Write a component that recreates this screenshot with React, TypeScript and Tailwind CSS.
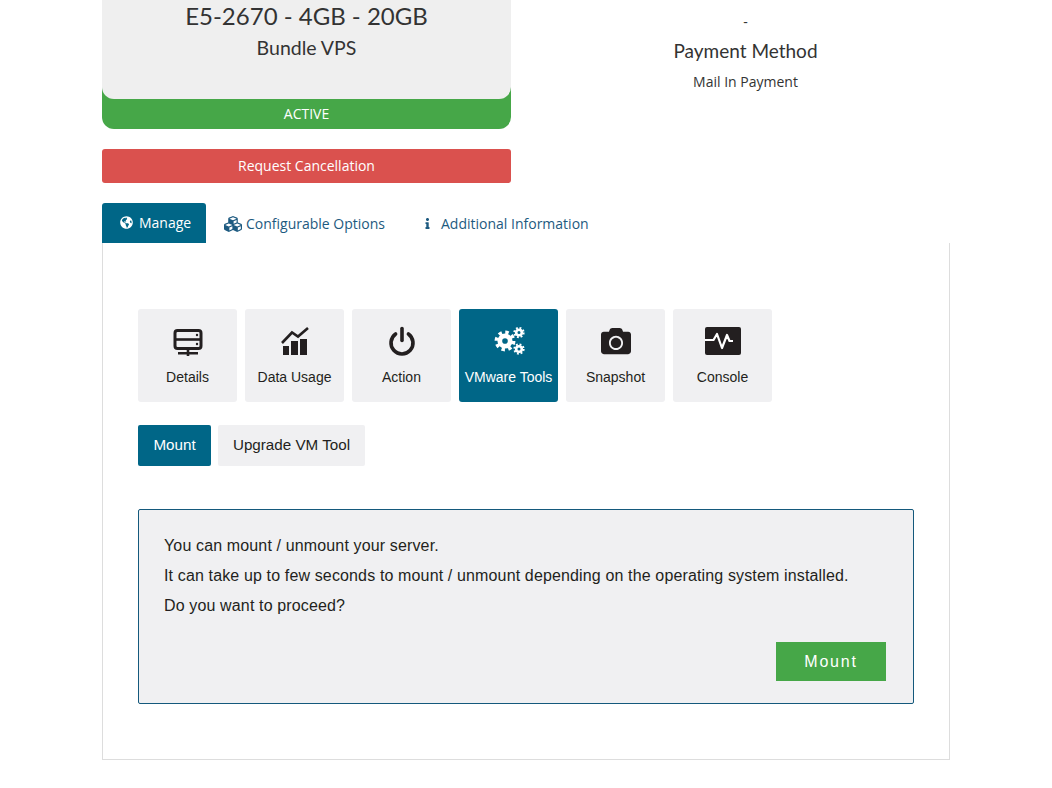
import React from "react";
import { FaCamera, FaCubes, FaGlobeAmericas, FaInfo } from "react-icons/fa";

const ServerIcon = () => (
  <svg width="30" height="30" viewBox="0 0 30 30" fill="none">
    <rect x="2" y="4.5" width="26" height="18" rx="2.5" stroke="#231f20" strokeWidth="3" />
    <path d="M2 13.5h26" stroke="#231f20" strokeWidth="2.6" />
    <circle cx="24" cy="9" r="1.2" fill="#231f20" />
    <circle cx="24" cy="18" r="1.2" fill="#231f20" />
    <path d="M15 23v7M5 27.2h20" stroke="#231f20" strokeWidth="2.6" />
  </svg>
);

const ChartIcon = () => (
  <svg width="30" height="30" viewBox="0 0 30 30" fill="#231f20">
    <rect x="3" y="20" width="6" height="9" />
    <rect x="11" y="15" width="7" height="14" />
    <rect x="20" y="13" width="7" height="16" />
    <path d="M2 17 12 6.5l6 4L28 2" fill="none" stroke="#231f20" strokeWidth="2.6" />
  </svg>
);

const PowerIcon = () => (
  <svg width="30" height="30" viewBox="0 0 30 30" fill="none" stroke="#231f20" strokeWidth="3.6" strokeLinecap="round">
    <path d="M15 2.5v12" />
    <path d="M8.6 8a11 11 0 1 0 12.8 0" />
  </svg>
);

const Gear = ({ cx, cy, r }: { cx: number; cy: number; r: number }) => {
  const teeth = 8;
  const tr = r * 1.2;
  const circ = 2 * Math.PI * tr;
  const dash = circ / teeth / 2;
  return (
    <g fill="none" stroke="#fff">
      <circle cx={cx} cy={cy} r={r * 0.72} strokeWidth={r * 0.66} />
      <circle cx={cx} cy={cy} r={tr} strokeWidth={r * 0.5} strokeDasharray={`${dash} ${dash}`} />
    </g>
  );
};

const GearsIcon = () => (
  <svg width="32" height="30" viewBox="0 0 32 30">
    <Gear cx={12} cy={15} r={7.2} />
    <Gear cx={26} cy={6.5} r={3.9} />
    <Gear cx={26} cy={23} r={3.9} />
  </svg>
);

const ConsoleIcon = () => (
  <svg width="36" height="28" viewBox="0 0 36 28">
    <rect width="36" height="28" rx="2" fill="#231f20" />
    <path d="M0 13h8.5l3.5-6 5 14 5-13 2.5 6H28" fill="none" stroke="#fff" strokeWidth="2.2" strokeLinejoin="round" />
  </svg>
);

const tiles = [
  { label: "Details", icon: <ServerIcon /> },
  { label: "Data Usage", icon: <ChartIcon /> },
  { label: "Action", icon: <PowerIcon /> },
  { label: "VMware Tools", icon: <GearsIcon />, active: true },
  { label: "Snapshot", icon: <FaCamera className="text-[30px] text-[#231f20]" /> },
  { label: "Console", icon: <ConsoleIcon /> },
];

export default function App() {
  return (
    <div className="h-[788px] overflow-hidden bg-white pl-[102px] pr-[102px] font-['Open_Sans',sans-serif] text-[#333]">
      <div className="flex">
        <div className="w-[409px]">
          <div className="overflow-hidden rounded-b-[12px] bg-[#46a748]">
            <div className="flex h-[99px] flex-col items-center rounded-b-[12px] bg-[#efefef] font-['Lato',sans-serif]">
              <div className="text-[24px] leading-[32px] text-[#333]">E5-2670 - 4GB - 20GB</div>
              <div className="mt-[4px] text-[19.5px] leading-[24px] text-[#333]">Bundle VPS</div>
            </div>
            <div className="flex h-[30px] items-center justify-center pb-[2px] text-[14px] text-white">ACTIVE</div>
          </div>
          <div className="mt-[20px] flex h-[34px] items-center justify-center rounded-[3px] bg-[#da514e] pb-[1px] text-[14px] text-white">
            Request Cancellation
          </div>
        </div>
        <div className="ml-[30px] flex w-[409px] flex-col items-center">
          <div className="mt-[12px] text-[14px] leading-[20px]">-</div>
          <div className="mt-[6px] font-['Lato',sans-serif] text-[19px] leading-[26px]">Payment Method</div>
          <div className="mt-[8px] text-[14px] leading-[20px]">Mail In Payment</div>
        </div>
      </div>

      <div className="mt-[20px] flex h-[40px] text-[14px]">
        <div className="flex h-[40px] w-[104px] items-center rounded-t-[3px] bg-[#006687] pb-[1px] pl-[18px] text-white">
          <FaGlobeAmericas className="mr-[6px] text-[13px]" />
          Manage
        </div>
        <div className="flex items-center pl-[18px] pt-[1px] text-[#1d5a80]">
          <FaCubes className="mr-[4px] text-[18px]" />
          Configurable Options
        </div>
        <div className="ml-[37px] flex items-center pt-[1px] text-[#1d5a80]">
          <FaInfo className="mr-[8px] text-[11px]" />
          Additional Information
        </div>
      </div>

      <div className="h-[517px] w-[848px] border border-t-0 border-[#ddd] pl-[35px] pr-[35px] pt-[66px] font-['Liberation_Sans',sans-serif]">
        <div className="flex gap-[8px]">
          {tiles.map((t) => (
            <div
              key={t.label}
              className={`flex h-[93px] w-[99px] flex-col items-center rounded-[3px] pt-[16px] text-[14px] ${
                t.active ? "bg-[#006687] text-white" : "bg-[#f0f0f2] text-[#231f20]"
              }`}
            >
              <div className="flex h-[32px] items-center justify-center">{t.icon}</div>
              <div className="mt-[10px] leading-[20px] whitespace-nowrap">{t.label}</div>
            </div>
          ))}
        </div>

        <div className="mt-[23px] flex gap-[7px] text-[15.2px]">
          <div className="flex h-[41px] w-[73px] items-center justify-center rounded-[2px] bg-[#006687] text-white">Mount</div>
          <div className="flex h-[41px] w-[147px] items-center justify-center rounded-[2px] bg-[#f0f0f2] text-[#231f20]">Upgrade VM Tool</div>
        </div>

        <div className="mt-[43px] h-[195px] w-[776px] rounded-[2px] border border-[#14597c] bg-[#f0f0f2] pl-[25px] pr-[27px] pt-[21px] text-[16px] leading-[30px] tracking-[0.14px] text-[#231f20]">
          <p>You can mount / unmount your server.</p>
          <p>It can take up to few seconds to mount / unmount depending on the operating system installed.</p>
          <p>Do you want to proceed?</p>
          <div className="mt-[21px] flex justify-end">
            <div className="flex h-[39px] w-[110px] items-center justify-center bg-[#46a748] pt-[1px] tracking-[1.8px] text-white">Mount</div>
          </div>
        </div>
      </div>
    </div>
  );
}
